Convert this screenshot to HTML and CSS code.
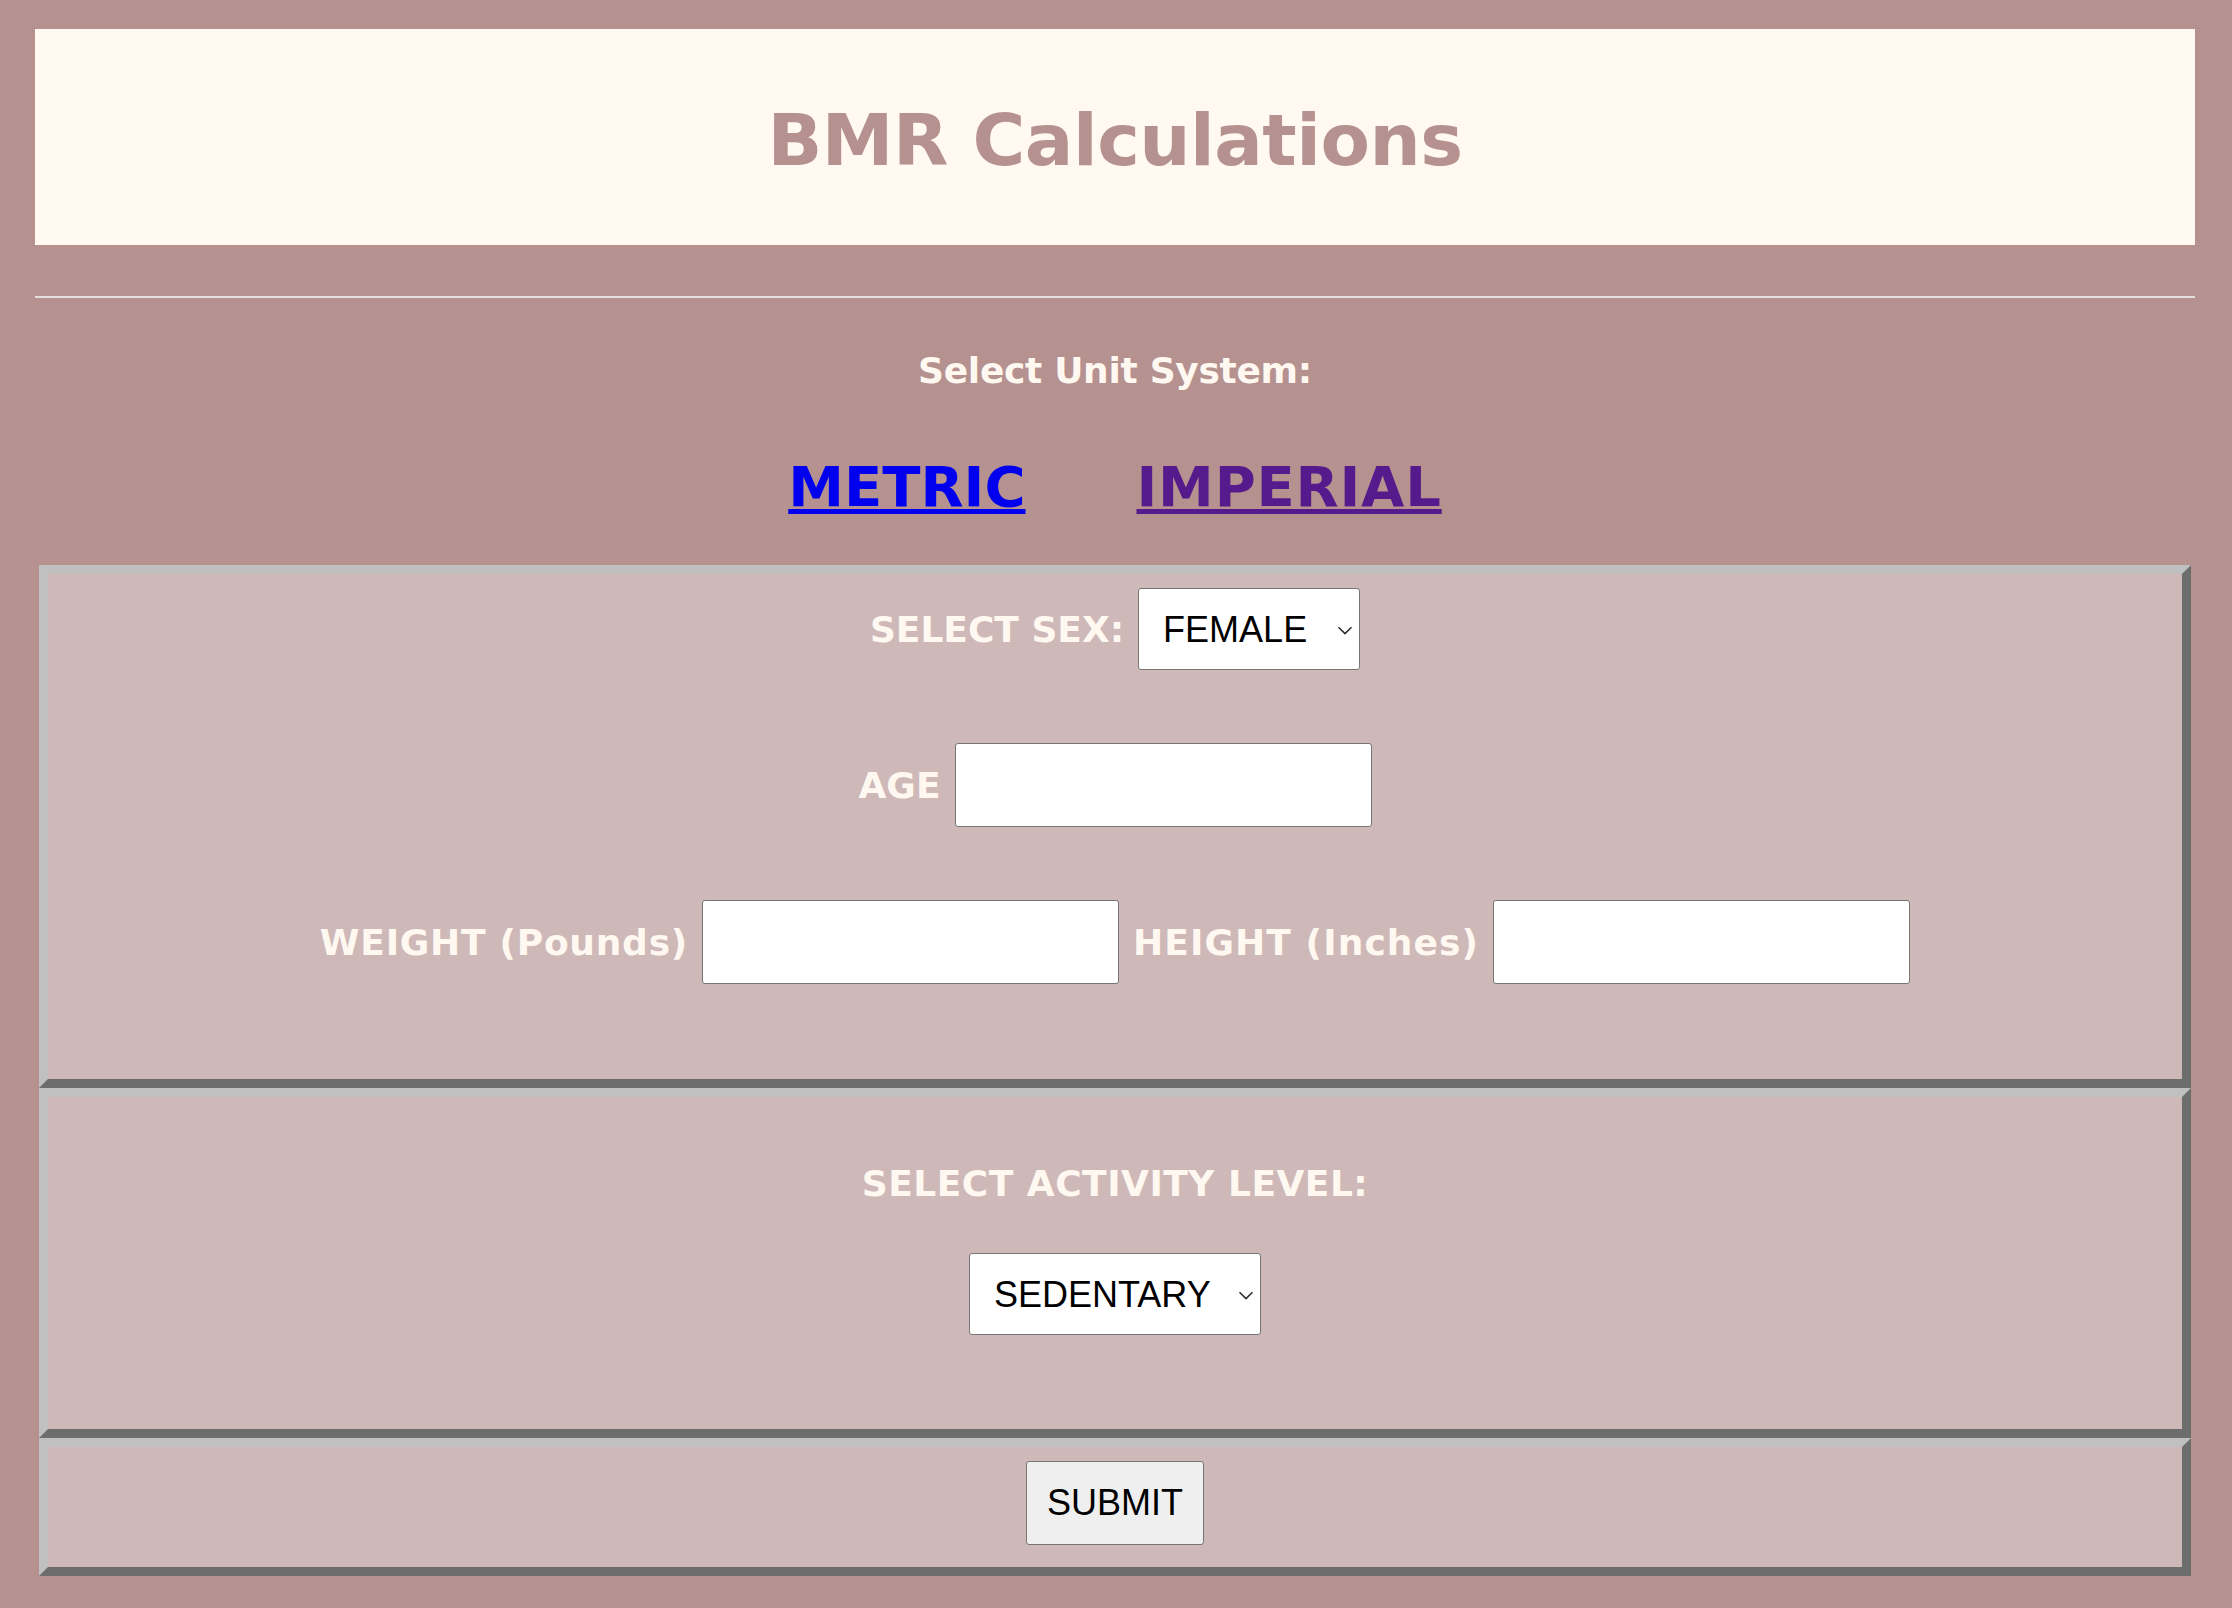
FILE: index.html
```html
<!DOCTYPE html>
<html lang="en">
<head>
<meta charset="utf-8">
<title>BMR Calculations</title>
<link rel="stylesheet" href="styles.css">
</head>
<body>
<header class="banner"><h1 class="title">BMR Calculations</h1></header>
<hr class="rule">
<p class="unit-heading">Select Unit System:</p>
<nav class="units"><a class="unit unit-metric" href="#metric">METRIC</a><a class="unit unit-imperial" href="#imperial">IMPERIAL</a></nav>
<form class="calc" action="#">
  <fieldset class="panel">
    <div class="panel-body">
      <div class="row">
        <label class="lbl" for="sex">SELECT SEX:</label>
        <span class="sel-wrap">
          <select id="sex" class="sel sel-sex"><option>FEMALE</option><option>MALE</option></select>
          <svg class="chev" viewBox="0 0 16 9" aria-hidden="true"><polyline points="1.5,1.2 8,7.6 14.5,1.2" fill="none" stroke="#2a2a2a" stroke-width="1.5"/></svg>
        </span>
      </div>
      <div class="row">
        <label class="lbl" for="age">AGE</label>
        <input id="age" class="field" type="text">
      </div>
      <div class="row">
        <label class="lbl lbl-wide" for="weight">WEIGHT (Pounds)</label>
        <input id="weight" class="field" type="text">
        <label class="lbl lbl-wider" for="height">HEIGHT (Inches)</label>
        <input id="height" class="field" type="text">
      </div>
    </div>
  </fieldset>
  <fieldset class="panel">
    <div class="panel-activity">
      <label class="lbl lbl-block" for="activity">SELECT ACTIVITY LEVEL:</label>
      <div class="center">
        <span class="sel-wrap">
          <select id="activity" class="sel sel-act"><option>SEDENTARY</option><option>LIGHT</option><option>MODERATE</option><option>ACTIVE</option></select>
          <svg class="chev" viewBox="0 0 16 9" aria-hidden="true"><polyline points="1.5,1.2 8,7.6 14.5,1.2" fill="none" stroke="#2a2a2a" stroke-width="1.5"/></svg>
        </span>
      </div>
    </div>
  </fieldset>
  <fieldset class="panel">
    <div class="panel-submit">
      <button class="submit" type="button">SUBMIT</button>
    </div>
  </fieldset>
</form>
</body>
</html>
```
FILE: styles.css
```css
html {
  background: #b5918f;
}
body {
  margin: 0;
  padding: 29px 37px 30px 35px;
  background: #b5918f;
  font-family: "DejaVu Sans", Verdana, sans-serif;
  font-weight: bold;
  font-size: 36px;
  color: #fff8f0;
}
.banner {
  background: #fff9f1;
  padding: 69px 0 63px;
  text-align: center;
}
.title {
  margin: 0;
  font-size: 72px;
  font-weight: bold;
  line-height: normal;
  letter-spacing: -0.5px;
  color: #b5918f;
}
.rule {
  margin: 51px 0 0;
  height: 0;
  border: 0;
  border-top: 2px solid #e6dfdf;
}
.unit-heading {
  margin: 52px 0 0;
  text-align: center;
  line-height: normal;
  letter-spacing: -0.3px;
}
.units {
  margin-top: 63px;
  display: flex;
  justify-content: center;
  gap: 111px;
  font-size: 56px;
  line-height: normal;
}
.unit {
  text-decoration: underline;
}
.unit-metric {
  color: #0000ee;
}
.unit-imperial {
  color: #551a8b;
  letter-spacing: 0.8px;
}
.calc {
  margin: 46px 0 0;
}
.panel {
  margin: 0 4px;
  padding: 0;
  min-width: 0;
  border: 9px solid;
  border-color: #c0c0c0 #6d6d6d #6d6d6d #c0c0c0;
  background: #ceb8b8;
}
.panel-body {
  display: flex;
  flex-direction: column;
  gap: 73px;
  padding: 14px 0 95px;
}
.row {
  display: flex;
  justify-content: center;
  align-items: center;
  gap: 14px;
}
.lbl {
  line-height: normal;
}
.lbl-wide {
  letter-spacing: 0.75px;
}
.lbl-wider {
  letter-spacing: 1.1px;
}
.lbl-block {
  display: block;
  text-align: center;
  letter-spacing: 0.5px;
}
.sel-wrap {
  position: relative;
  display: inline-flex;
}
.sel {
  -webkit-appearance: none;
  appearance: none;
  font-family: "Liberation Sans", Arial, sans-serif;
  font-size: 36px;
  font-weight: normal;
  color: #000;
  background: #fff;
  border: 1px solid #767676;
  border-radius: 3px;
  height: 82px;
  box-sizing: border-box;
  padding: 0 0 0 24px;
  margin: 0;
}
.sel-sex {
  width: 222px;
}
.sel-act {
  width: 292px;
}
.chev {
  position: absolute;
  right: 7px;
  top: 50%;
  width: 16px;
  height: 9px;
  margin-top: -3px;
  pointer-events: none;
}
.field {
  width: 417px;
  height: 84px;
  box-sizing: border-box;
  font-family: "Liberation Sans", Arial, sans-serif;
  font-size: 36px;
  background: #fff;
  border: 1px solid #767676;
  border-radius: 3px;
  margin: 0;
}
.panel-activity {
  padding: 66px 0 94px;
}
.center {
  display: flex;
  justify-content: center;
  margin-top: 49px;
}
.panel-submit {
  display: flex;
  justify-content: center;
  padding: 14px 0 22px;
}
.submit {
  font-family: "Liberation Sans", Arial, sans-serif;
  font-size: 36px;
  font-weight: normal;
  color: #000;
  background: #efefef;
  border: 1px solid #767676;
  border-radius: 3px;
  width: 178px;
  height: 84px;
  box-sizing: border-box;
  padding: 0;
  margin: 0;
}
```
